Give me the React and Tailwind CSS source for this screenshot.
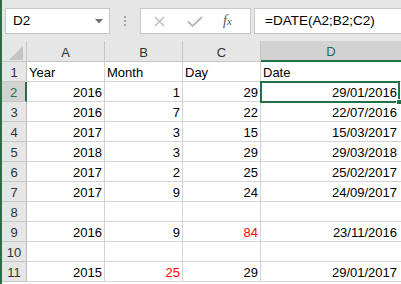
import React from 'react';

const rows = [
  [{ t: 'Year', l: true }, { t: 'Month', l: true }, { t: 'Day', l: true }, { t: 'Date', l: true }],
  [{ t: '2016' }, { t: '1' }, { t: '29' }, { t: '29/01/2016' }],
  [{ t: '2016' }, { t: '7' }, { t: '22' }, { t: '22/07/2016' }],
  [{ t: '2017' }, { t: '3' }, { t: '15' }, { t: '15/03/2017' }],
  [{ t: '2018' }, { t: '3' }, { t: '29' }, { t: '29/03/2018' }],
  [{ t: '2017' }, { t: '2' }, { t: '25' }, { t: '25/02/2017' }],
  [{ t: '2017' }, { t: '9' }, { t: '24' }, { t: '24/09/2017' }],
  [{}, {}, {}, {}],
  [{ t: '2016' }, { t: '9' }, { t: '84', red: true }, { t: '23/11/2016' }],
  [{}, {}, {}, {}],
  [{ t: '2015' }, { t: '25', red: true }, { t: '29' }, { t: '29/01/2017' }],
];

function Toolbar() {
  return (
    <div className="h-[41px] bg-[#e6e6e6] flex items-start pt-[8px] pl-[3px]">
      {/* name box */}
      <div className="w-[105px] h-[26px] bg-white border border-[#c6c6c6] flex items-center pl-[7px] pr-[6px]">
        <span className="flex-1 text-[13.5px] text-black">D2</span>
        <svg width="8" height="5" viewBox="0 0 8 5"><path d="M0 0H8L4 4.5Z" fill="#707070" /></svg>
      </div>
      <div className="w-[30px] h-[26px] flex flex-col items-center justify-center gap-[2px]">
        <div className="w-[2px] h-[2px] bg-[#a6a6a6]" />
        <div className="w-[2px] h-[2px] bg-[#a6a6a6]" />
        <div className="w-[2px] h-[2px] bg-[#a6a6a6]" />
      </div>
      {/* cancel / enter / fx */}
      <div className="w-[111px] h-[26px] bg-white border border-[#c6c6c6] flex items-center">
        <svg className="ml-[13px]" width="11" height="11" viewBox="0 0 11 11">
          <path d="M1 1L10 10M10 1L1 10" stroke="#b8b8b8" strokeWidth="1.3" />
        </svg>
        <svg className="ml-[22px]" width="16" height="11" viewBox="0 0 16 11">
          <path d="M1 5.5L5.5 10L15 1" stroke="#b8b8b8" strokeWidth="1.9" fill="none" />
        </svg>
        <span className="ml-[20px] text-[14px] text-[#555] italic leading-none" style={{ fontFamily: '"Liberation Serif", serif' }}>
          f<span className="text-[11px]">x</span>
        </span>
      </div>
      <div className="ml-[3px] flex-1 h-[26px] bg-white border border-r-0 border-[#c6c6c6] flex items-center pl-[10px]">
        <span className="text-[13.5px] text-black">=DATE(A2;B2;C2)</span>
      </div>
    </div>
  );
}

function HeaderRow() {
  const cols = ['A', 'B', 'C'];
  return (
    <div className="flex h-[21px] bg-[#e6e6e6]">
      <div className="w-[25px] border-r border-b border-[#c6c6c6] flex items-end justify-end pr-[3px] pb-[1px]">
        <svg width="14" height="14" viewBox="0 0 14 14"><path d="M14 0V14H0Z" fill="#c4c4c4" /></svg>
      </div>
      {cols.map((c) => (
        <div key={c} className="w-[78px] border-r border-b border-[#c6c6c6] flex items-end justify-center pb-[2px] leading-none text-[13px] text-[#333]">
          {c}
        </div>
      ))}
      <div className="flex-1 bg-[#d2d2d2] border-b-2 border-[#217346] flex items-end justify-center pb-[2px] leading-none text-[13px] text-[#217346]">
        D
      </div>
    </div>
  );
}

function Cell({ c, w, last }) {
  const base = 'h-full border-b border-[#d4d4d4] flex items-end pb-[2px] leading-none text-[13px] ';
  return (
    <div className={base + (last ? 'flex-1 pl-[2px] pr-[4px] ' : w + ' border-r px-[2px] ') + (c.l ? 'justify-start ' : 'justify-end ') + (c.red ? 'text-[#ff0000]' : 'text-black')}>
      {c.t}
    </div>
  );
}

export default function App() {
  return (
    <div className="w-[401px] h-[284px] overflow-hidden flex bg-white" style={{ fontFamily: '"Liberation Sans", Arial, sans-serif' }}>
      <div className="w-[2px] h-full bg-[#217346]" />
      <div className="flex-1 flex flex-col">
        <Toolbar />
        <HeaderRow />
        {rows.map((r, i) => {
          const sel = i === 1;
          return (
            <div key={i} className="flex h-[20px] shrink-0">
              <div
                className={
                  'w-[25px] h-full border-b border-[#c6c6c6] flex items-end justify-center pb-[2px] leading-none text-[13px] ' +
                  (sel ? 'bg-[#d2d2d2] border-r-2 border-r-[#217346] text-[#217346]' : 'bg-[#e6e6e6] border-r border-r-[#bdbdbd] text-[#333]')
                }
              >
                {i + 1}
              </div>
              <Cell c={r[0]} w="w-[78px]" />
              <Cell c={r[1]} w="w-[78px]" />
              <Cell c={r[2]} w="w-[78px]" />
              <div className="flex-1 h-full relative flex">
                <Cell c={r[3]} last />
                {sel && (
                  <div className="absolute -left-[1px] -top-[1px] right-[1px] -bottom-[1px] border-2 border-[#217346]">
                    <div className="absolute -right-[4px] -bottom-[4px] w-[6px] h-[6px] bg-[#217346] border border-white" />
                  </div>
                )}
              </div>
            </div>
          );
        })}
      </div>
    </div>
  );
}
